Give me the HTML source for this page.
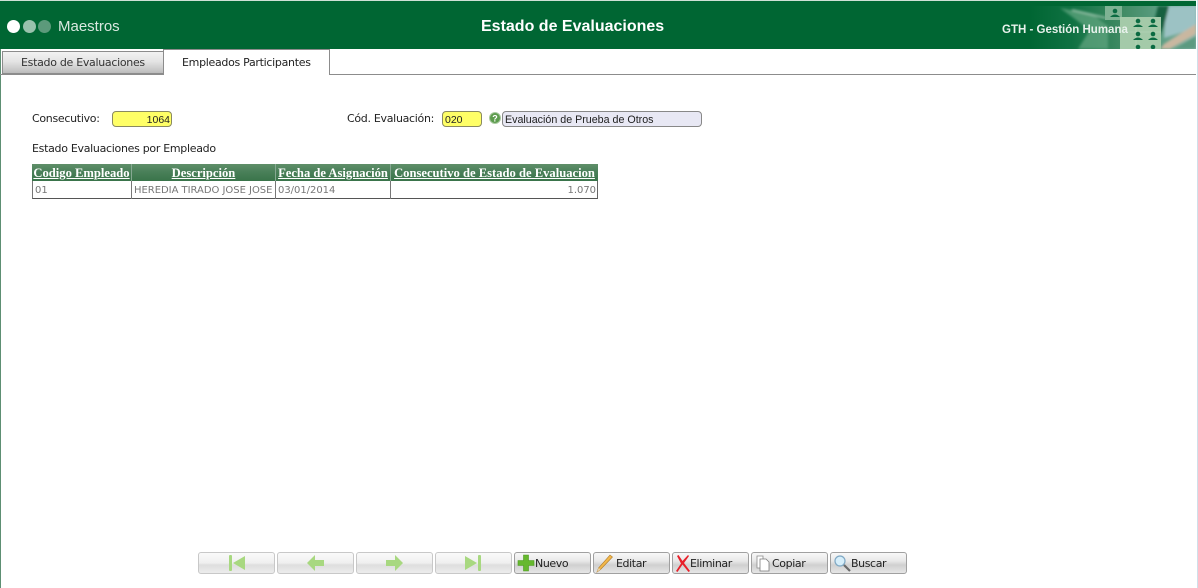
<!DOCTYPE html>
<html><head><meta charset="utf-8"><style>
html,body{margin:0;padding:0;background:#fff}
body{width:1198px;height:588px;position:relative;overflow:hidden;font-family:"DejaVu Sans","Liberation Sans",sans-serif}
.a{position:absolute;white-space:nowrap}
.lbl{font-size:11px;line-height:14px;color:#222;font-family:"DejaVu Sans",sans-serif;letter-spacing:-.3px}
.inp{box-sizing:border-box;height:16px;border:1px solid #8a8a60;border-radius:4px;background:#ffff66;font:10.5px/17px "Liberation Sans",sans-serif;color:#222}
.th{top:164px;height:17px;background:linear-gradient(#5f8f69 0,#4a8059 45%,#39744a 100%);color:#fff;font:bold 12.6px/18px "Liberation Serif",serif;text-decoration:underline;text-align:center;white-space:nowrap}
.td{top:181px;height:18px;box-sizing:border-box;font:10px/19px "DejaVu Sans",sans-serif;color:#777;white-space:nowrap;letter-spacing:-.03px}
.btn{position:absolute;top:552px;width:77px;height:22px;box-sizing:border-box;border:1px solid #b0b0b0;border-radius:3px;font:11px/22px "DejaVu Sans",sans-serif;color:#222;white-space:nowrap;letter-spacing:-.4px}
.on{background:linear-gradient(#f8f8f8 0,#e8e8e8 40%,#d0d0d0 60%,#e6e6e6 100%);border-color:#a0a0a0}
.off{background:linear-gradient(#fafafa 0,#efefef 50%,#dedede 60%,#ececec 100%);border-color:#c8c8c8}
.btn svg{position:absolute;left:0;top:0}
.btn span{position:absolute;top:0}
</style></head><body>
<div class="a" style="left:0;top:0;width:1196px;height:49px;background:#006633;border-top:1px solid #cfe0d6;box-sizing:border-box"></div>
<div class="a" style="left:0;top:49px;width:1px;height:539px;background:#5d8f73"></div>
<div class="a" style="left:1197px;top:0;width:1px;height:588px;background:#cfe0ea"></div>
<svg class="a" style="left:1030px;top:0" width="166" height="49" viewBox="0 0 166 49">
<defs>
<linearGradient id="g" x1="0" x2="1" y1="0" y2="0"><stop offset="0" stop-color="#006633"/><stop offset=".25" stop-color="#0f7142"/><stop offset=".55" stop-color="#3f8a63"/><stop offset=".8" stop-color="#5f9f84"/><stop offset="1" stop-color="#8fb8b2"/></linearGradient>
<filter id="b" x="-20%" y="-20%" width="140%" height="140%"><feGaussianBlur stdDeviation="1.2"/></filter>
<clipPath id="c"><rect x="0" y="6" width="166" height="43"/></clipPath>
</defs>
<g clip-path="url(#c)">
<rect x="0" y="6" width="166" height="43" fill="url(#g)"/>
<g filter="url(#b)">
<path d="M30 8 L62 14 L78 26 L78 49 L48 49 L60 30 Z" fill="#5fa47f" opacity=".75"/>
<path d="M42 10 L76 18" stroke="#a3c9b2" stroke-width="2" opacity=".8"/>
<path d="M136 6 L166 6 L166 28 L134 38 Z" fill="#9cc2c4"/>
<path d="M128 6 L139 6 L134 26 L126 44 L122 30 Z" fill="#14603f"/>
<path d="M134 44 L166 24 L166 34 L140 49 L130 49 Z" fill="#c9b7a0"/>
<path d="M144 49 L166 36 L166 49 Z" fill="#5c9a80"/>
</g>
<rect x="75" y="6" width="17" height="14" fill="#7fb394"/>
<rect x="90" y="17" width="41" height="32" fill="#a4caa9"/>
<path d="M90 32h41M106 17v32" stroke="#b8d6bb" stroke-width=".6"/>
<g fill="#0b6b42"><circle cx="85" cy="11" r="2.3"/><path d="M80 17 q5-5 10 0z"/><circle cx="108" cy="21" r="2.3"/><path d="M103 27 q5-5 10 0z"/><circle cx="123" cy="21" r="2.3"/><path d="M118 27 q5-5 10 0z"/><circle cx="108" cy="34" r="2.3"/><path d="M103 40 q5-5 10 0z"/><circle cx="123" cy="34" r="2.3"/><path d="M118 40 q5-5 10 0z"/><circle cx="108" cy="47" r="2.3"/><circle cx="123" cy="47" r="2.3"/></g>
</g>
</svg>
<div class="a" style="left:7px;top:20px;width:13px;height:13px;border-radius:50%;background:#fff"></div>
<div class="a" style="left:23px;top:20px;width:13px;height:13px;border-radius:50%;background:#99c2ad"></div>
<div class="a" style="left:38px;top:20px;width:13px;height:13px;border-radius:50%;background:#5c9a7b"></div>
<div class="a" style="left:58px;top:18px;font:15px/17px 'Liberation Sans',sans-serif;color:#d9e8e0">Maestros</div>
<div class="a" style="left:481px;top:18px;font:bold 16px/18px 'Liberation Sans',sans-serif;color:#fff">Estado de Evaluaciones</div>
<div class="a" style="left:1002px;top:23px;font:bold 11.5px/14px 'Liberation Sans',sans-serif;color:#e8f2ec">GTH - Gestión Humana</div>

<div class="a" style="left:0;top:74px;width:1196px;height:1px;background:#8c8c8c"></div>
<div class="a" style="left:2px;top:51px;width:162px;height:23px;box-sizing:border-box;border:1px solid #8c8c8c;background:linear-gradient(#f2f2f2,#e4e4e4 45%,#c4c4c4 90%,#bbb);"></div>
<div class="a lbl" style="left:21px;top:56px;color:#333">Estado de Evaluaciones</div>
<div class="a" style="left:163px;top:49px;width:167px;height:26px;box-sizing:border-box;border:1px solid #8c8c8c;border-bottom:0;background:#fff"></div>
<div class="a lbl" style="left:182px;top:56px;color:#222">Empleados Participantes</div>

<div class="a lbl" style="left:32px;top:112px">Consecutivo:</div>
<div class="a inp" style="left:112px;top:111px;width:60px;text-align:right;padding-right:1px">1064</div>
<div class="a lbl" style="left:347px;top:112px">Cód. Evaluación:</div>
<div class="a inp" style="left:442px;top:111px;width:40px;padding-left:2px">020</div>
<svg class="a" style="left:489px;top:112px" width="12" height="12" viewBox="0 0 12 12"><circle cx="6" cy="6" r="5.5" fill="#5d9c4e" stroke="#a9c9a0"/><text x="6" y="9.500" font-size="9" font-weight="bold" text-anchor="middle" fill="#fff" font-family="Liberation Sans">?</text></svg>
<div class="a inp" style="left:502px;top:111px;width:200px;background:#e8e8f4;border-color:#888;padding-left:2px;font-size:10.7px;color:#222">Evaluación de Prueba de Otros</div>
<div class="a lbl" style="left:32px;top:142px">Estado Evaluaciones por Empleado</div>

<div class="a" style="left:32px;top:164px;width:566px;height:17px;background:#86a892"></div>
<div class="a th" style="left:32px;width:99px">Codigo Empleado</div>
<div class="a th" style="left:132px;width:143px">Descripción</div>
<div class="a th" style="left:276px;width:114px">Fecha de Asignación</div>
<div class="a th" style="left:391px;width:207px">Consecutivo de Estado de Evaluacion</div>
<div class="a" style="left:32px;top:181px;width:566px;height:18px;box-sizing:border-box;border-bottom:1px solid #555;border-left:1px solid #777;border-right:1px solid #666"></div>
<div class="a" style="left:131px;top:181px;width:1px;height:18px;background:#777"></div>
<div class="a" style="left:275px;top:181px;width:1px;height:18px;background:#777"></div>
<div class="a" style="left:390px;top:181px;width:1px;height:18px;background:#777"></div>
<div class="a td" style="left:35px">01</div>
<div class="a td" style="left:134px">HEREDIA TIRADO JOSE JOSE</div>
<div class="a td" style="left:278px">03/01/2014</div>
<div class="a td" style="left:391px;width:205px;text-align:right">1.070</div>

<div class="btn off" style="left:198px"><svg width="75" height="20"><rect x="30" y="2" width="3" height="16" rx="1" fill="#a8d880"/><path d="M46 3v14l-12-7z" fill="#a8d880"/></svg></div>
<div class="btn off" style="left:277px"><svg width="75" height="20"><path d="M29 10l8-8v5h9v6h-9v5z" fill="#a8d880"/></svg></div>
<div class="btn off" style="left:356px"><svg width="75" height="20"><path d="M46 10l-8-8v5h-9v6h9v5z" fill="#a8d880"/></svg></div>
<div class="btn off" style="left:435px"><svg width="75" height="20"><path d="M29 3v14l12-7z" fill="#a8d880"/><rect x="42" y="2" width="3" height="16" rx="1" fill="#a8d880"/></svg></div>
<div class="btn on" style="left:514px"><svg width="24" height="20"><path d="M8.500 2h5v5.500h5.500v5h-5.500V18h-5v-5.500H3v-5h5.500z" fill="#66b82e" stroke="#4c9a20" stroke-width=".6"/></svg><span style="left:20px">Nuevo</span></div>
<div class="btn on" style="left:593px"><svg width="24" height="20"><path d="M3 19l1.500-4L16 2l2.500 2L6.500 16.500z" fill="#f2b84b" stroke="#b07b28" stroke-width=".6"/><path d="M3 19l1.500-4 2 1.500z" fill="#e8d3a8"/></svg><span style="left:22px">Editar</span></div>
<div class="btn on" style="left:672px"><svg width="24" height="20"><path d="M4 3l1.500-1 4 6L15 2l1 1-5 7 6 8-1.500 1L9.500 11.500 4.500 19 3 18l5-7.500z" fill="#e8202a"/></svg><span style="left:17px">Eliminar</span></div>
<div class="btn on" style="left:751px"><svg width="24" height="20"><path d="M5 3h6v12H5z" fill="#fff" stroke="#8a8a8a" stroke-width=".8"/><path d="M8 6h6l3 3v9H8z" fill="#fff" stroke="#7a7a7a" stroke-width=".8"/></svg><span style="left:20px">Copiar</span></div>
<div class="btn on" style="left:830px"><svg width="24" height="20"><circle cx="9" cy="8" r="5" fill="#d6eefa" stroke="#7fa8c4" stroke-width="1.2"/><path d="M13 12l6 6" stroke="#6a6a6a" stroke-width="2.2"/></svg><span style="left:20px">Buscar</span></div>
</body></html>
